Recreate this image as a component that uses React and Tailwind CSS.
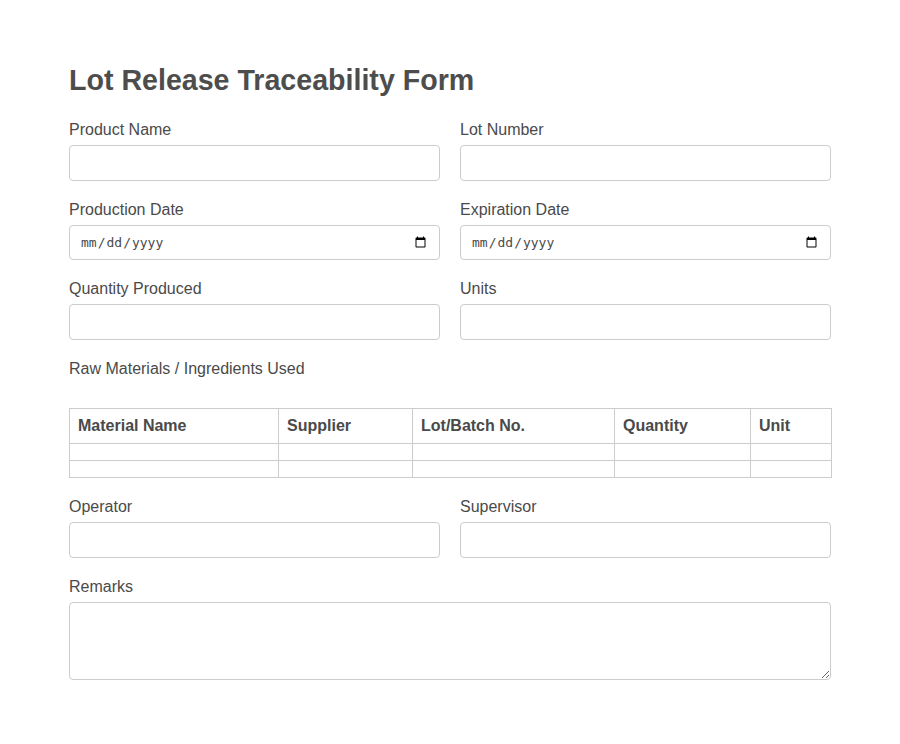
import React from 'react';

const Field = ({ label, type = 'text' }) => (
  <div className="flex flex-col">
    <label className="text-[16px] leading-[18px] mb-[6px] text-[#4a4a4a]">{label}</label>
    <input
      type={type}
      className={`w-full border border-[#ccc] rounded-[4px] bg-white px-[10px] text-[#4a4a4a] ${type === 'date' ? "h-[35px] text-[13px] font-['DejaVu_Sans_Mono',monospace]" : 'h-[36px] text-[16px]'}`}
    />
  </div>
);

const columns = [
  { name: 'Material Name', w: 'w-[209px]' },
  { name: 'Supplier', w: 'w-[134px]' },
  { name: 'Lot/Batch No.', w: 'w-[202px]' },
  { name: 'Quantity', w: 'w-[136px]' },
  { name: 'Unit', w: 'w-[81px]' },
];

export default function App() {
  return (
    <div className="min-h-[744px] bg-white font-['Liberation_Sans',Arial,sans-serif] text-[#4a4a4a]">
      <div className="w-[762px] mx-auto pt-[61px]">
        <h1 className="text-[28.6px] leading-[38px] font-bold text-[#4d4d4d] mb-[22px]">
          Lot Release Traceability Form
        </h1>

        <div className="grid grid-cols-2 gap-x-[20px] gap-y-[20px]">
          <Field label="Product Name" />
          <Field label="Lot Number" />
          <Field label="Production Date" type="date" />
          <Field label="Expiration Date" type="date" />
          <Field label="Quantity Produced" />
          <Field label="Units" />
        </div>

        <div className="mt-[20px]">
          <div className="text-[16px] leading-[18px] text-[#4a4a4a]">Raw Materials / Ingredients Used</div>
          <table className="mt-[30px] w-full border-collapse table-fixed">
            <thead>
              <tr>
                {columns.map((c) => (
                  <th key={c.name} className={`${c.w} border border-[#ccc] p-[8px] text-left text-[16px] leading-[18px] font-bold text-[#4a4a4a]`}>
                    {c.name}
                  </th>
                ))}
              </tr>
            </thead>
            <tbody>
              {[0, 1].map((r) => (
                <tr key={r}>
                  {columns.map((c) => (
                    <td key={c.name} className="border border-[#ccc] p-[8px] h-[17px]"></td>
                  ))}
                </tr>
              ))}
            </tbody>
          </table>
        </div>

        <div className="grid grid-cols-2 gap-x-[20px] mt-[20px]">
          <Field label="Operator" />
          <Field label="Supervisor" />
        </div>

        <div className="flex flex-col mt-[20px]">
          <label className="text-[16px] leading-[18px] mb-[6px] text-[#4a4a4a]">Remarks</label>
          <textarea className="h-[78px] w-full border border-[#ccc] rounded-[4px] bg-white p-[10px] text-[16px]" />
        </div>
      </div>
    </div>
  );
}
